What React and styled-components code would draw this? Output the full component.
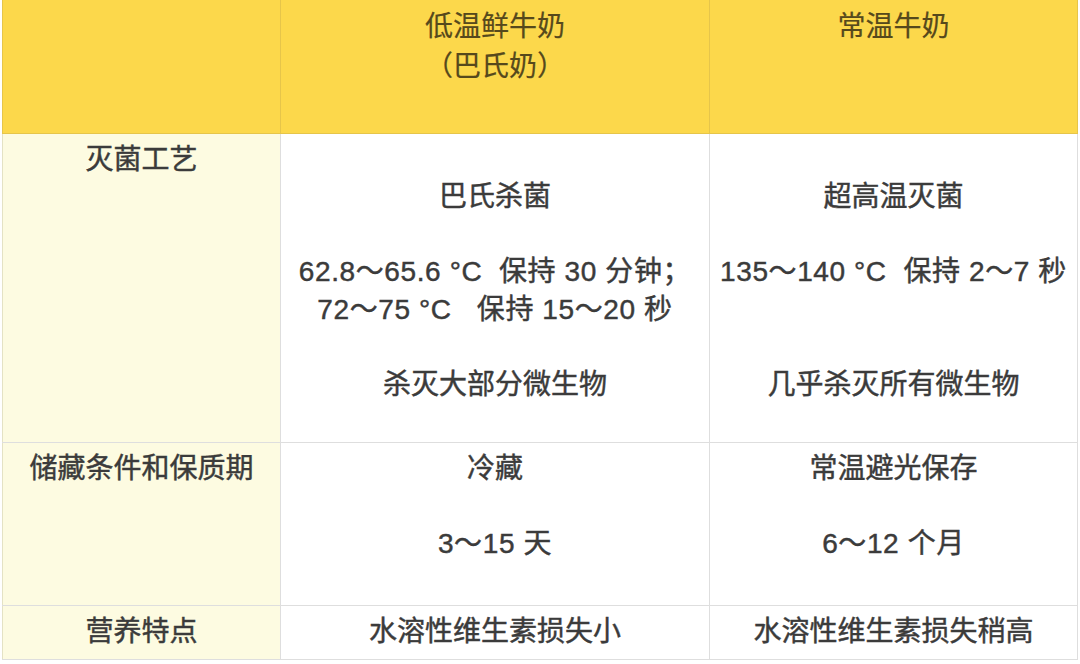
import styled, { createGlobalStyle } from "styled-components";

const GlobalStyle = createGlobalStyle`
  html, body {
    margin: 0;
    padding: 0;
    background: #fff;
  }
  body {
    font-family: "Liberation Sans", "Noto Sans CJK SC", sans-serif;
  }
`;

const Page = styled.div`
  padding: 0 3px 0 2px;
  width: 1080px;
  box-sizing: border-box;
`;

const Table = styled.table`
  width: 100%;
  border-collapse: collapse;
  table-layout: fixed;
  color: #3b3b3b;
  font-size: 28px;
`;

const HeadRow = styled.tr`
  height: 133px;
  background: #fcd84b;
`;

const Row = styled.tr`
  height: ${(p) => p.$h}px;
`;

const HeadCell = styled.th`
  border: 1px solid #e6c54a;
  border-top: none;
  vertical-align: top;
  padding: 7px 8px 0;
  font-weight: normal;
  line-height: 40px;
  color: #56491c;
  text-align: center;
  -webkit-text-stroke: 0.2px #56491c;
`;

const Cell = styled.td`
  border: 1px solid #dedede;
  vertical-align: top;
  padding: 7px 0 0;
  line-height: 37.5px;
  text-align: center;
  background: ${(p) => (p.$label ? "#fdfbe1" : "#fff")};
  border-left-color: ${(p) => (p.$label ? "#e4e2c4" : "#dedede")};
  -webkit-text-stroke: 0.45px #3b3b3b;
`;

const Line = styled.div`
  min-height: 37.5px;
  white-space: pre;
  letter-spacing: ${(p) => (p.$num ? "0.6px" : "0")};
`;

// lines holding digits are a little wider in the source
const Lines = ({ items }) =>
  items.map((t, i) => (
    <Line key={i} $num={/\d/.test(t)}>
      {t}
    </Line>
  ));

export default function App() {
  return (
    <Page>
      <GlobalStyle />
      <Table>
        <colgroup>
          <col style={{ width: 278 }} />
          <col style={{ width: 429 }} />
          <col style={{ width: 368 }} />
        </colgroup>
        <thead>
          <HeadRow>
            <HeadCell />
            <HeadCell>
              低温鲜牛奶
              <br />
              （巴氏奶）
            </HeadCell>
            <HeadCell>常温牛奶</HeadCell>
          </HeadRow>
        </thead>
        <tbody>
          <Row $h={309}>
            <Cell $label>灭菌工艺</Cell>
            <Cell>
              <Lines
                items={[
                  "",
                  "巴氏杀菌",
                  "",
                  "62.8～65.6 °C  保持 30 分钟；",
                  "72～75 °C   保持 15～20 秒",
                  "",
                  "杀灭大部分微生物",
                ]}
              />
            </Cell>
            <Cell>
              <Lines
                items={[
                  "",
                  "超高温灭菌",
                  "",
                  "135～140 °C  保持 2～7 秒",
                  "",
                  "",
                  "几乎杀灭所有微生物",
                ]}
              />
            </Cell>
          </Row>
          <Row $h={163}>
            <Cell $label>储藏条件和保质期</Cell>
            <Cell>
              <Lines items={["冷藏", "", "3～15 天"]} />
            </Cell>
            <Cell>
              <Lines items={["常温避光保存", "", "6～12 个月"]} />
            </Cell>
          </Row>
          <Row $h={54}>
            <Cell $label>营养特点</Cell>
            <Cell>水溶性维生素损失小</Cell>
            <Cell>水溶性维生素损失稍高</Cell>
          </Row>
        </tbody>
      </Table>
    </Page>
  );
}
